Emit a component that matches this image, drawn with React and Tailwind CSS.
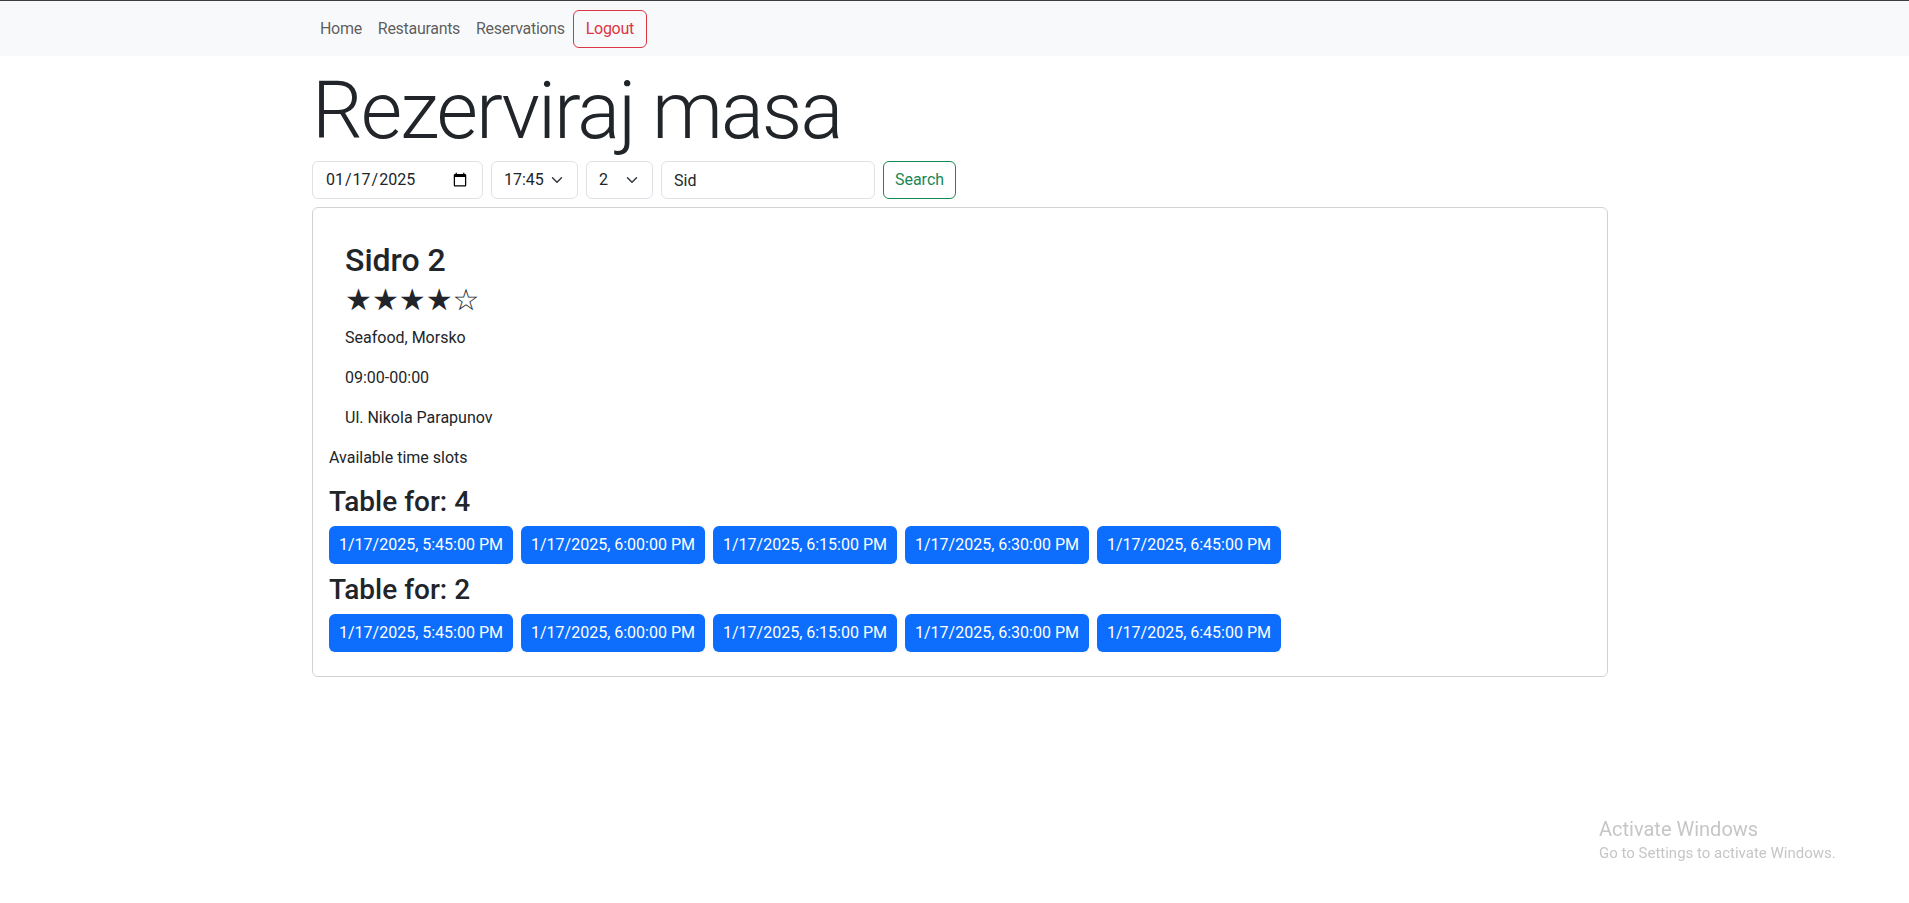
import React, { useState } from "react";

const slots = [
  "1/17/2025, 5:45:00 PM",
  "1/17/2025, 6:00:00 PM",
  "1/17/2025, 6:15:00 PM",
  "1/17/2025, 6:30:00 PM",
  "1/17/2025, 6:45:00 PM",
];

const tables = [
  { seats: 4, slots },
  { seats: 2, slots },
];

function Chevron() {
  return (
    <svg
      className="pointer-events-none absolute right-[13px] top-1/2 -translate-y-1/2"
      width="16"
      height="12"
      viewBox="0 0 16 16"
      fill="none"
    >
      <path
        d="m2 5 6 6 6-6"
        stroke="#343a40"
        strokeWidth="2"
        strokeLinecap="round"
        strokeLinejoin="round"
      />
    </svg>
  );
}

function Navbar() {
  return (
    <nav className="h-14 border-t border-[#3c3c3c] bg-[#f8f9fa]">
      <div className="ml-[300px] flex h-full w-[1320px] items-center px-3 tracking-[-0.3px]">
        <a href="#" className="px-2 py-2 leading-6 text-[rgba(0,0,0,0.65)]">
          Home
        </a>
        <a href="#" className="px-2 py-2 leading-6 text-[rgba(0,0,0,0.65)]">
          Restaurants
        </a>
        <a href="#" className="px-2 py-2 leading-6 text-[rgba(0,0,0,0.65)]">
          Reservations
        </a>
        <button className="h-[38px] rounded-md border border-[#dc3545] px-3 leading-6 text-[#dc3545]">
          Logout
        </button>
      </div>
    </nav>
  );
}

function SearchForm() {
  const [date, setDate] = useState("2025-01-17");
  const [time, setTime] = useState("17:45");
  const [people, setPeople] = useState("2");
  const [name, setName] = useState("Sid");

  return (
    <form
      className="mb-2 flex h-[38px] gap-2"
      onSubmit={(e) => e.preventDefault()}
    >
      <input
        type="date"
        value={date}
        onChange={(e) => setDate(e.target.value)}
        className="h-[38px] w-[171px] rounded-md border border-[#dee2e6] px-3 text-base text-[#212529] outline-none"
      />
      <div className="relative w-[87px]">
        <select
          value={time}
          onChange={(e) => setTime(e.target.value)}
          className="h-[38px] w-full appearance-none rounded-md border border-[#dee2e6] bg-white pl-3 pr-7 text-base text-[#212529] outline-none"
        >
          <option>17:30</option>
          <option>17:45</option>
          <option>18:00</option>
        </select>
        <Chevron />
      </div>
      <div className="relative w-[67px]">
        <select
          value={people}
          onChange={(e) => setPeople(e.target.value)}
          className="h-[38px] w-full appearance-none rounded-md border border-[#dee2e6] bg-white pl-3 pr-7 text-base text-[#212529] outline-none"
        >
          <option>1</option>
          <option>2</option>
          <option>3</option>
          <option>4</option>
        </select>
        <Chevron />
      </div>
      <input
        type="text"
        value={name}
        onChange={(e) => setName(e.target.value)}
        className="h-[38px] w-[214px] rounded-md border border-[#dee2e6] px-3 text-base text-[#212529] outline-none"
      />
      <button
        type="submit"
        className="h-[38px] w-[73px] rounded-md border border-[#198754] text-base text-[#198754]"
      >
        Search
      </button>
    </form>
  );
}

function RestaurantCard() {
  return (
    <div className="rounded-md border border-[#d2d2d2] p-4">
      <div className="px-4 pt-4">
        <h2 className="mb-2 pt-[3px] text-[32px] font-medium leading-[35.4px]">
          Sidro 2
        </h2>
        <div className="pb-[12px] font-['DejaVu_Sans',sans-serif] text-[30px] leading-[28px]">
          ★★★★☆
        </div>
        <p className="mb-4 leading-6">Seafood, Morsko</p>
        <p className="mb-4 leading-6">09:00-00:00</p>
        <p className="mb-4 leading-6">Ul. Nikola Parapunov</p>
      </div>
      <p className="mb-[14px] leading-6">Available time slots</p>
      {tables.map((t) => (
        <div key={t.seats}>
          <h3 className="mb-2 pt-[2px] text-[28px] font-medium leading-[32px]">
            Table for: {t.seats}
          </h3>
          <div className="flex flex-wrap">
            {t.slots.map((s) => (
              <button
                key={s}
                className="mb-2 mr-2 h-[38px] w-[184px] whitespace-nowrap rounded-md bg-[#0d6efd] text-base leading-6 text-white"
              >
                {s}
              </button>
            ))}
          </div>
        </div>
      ))}
    </div>
  );
}

export default function App() {
  return (
    <div className="min-h-screen bg-white font-['Roboto',sans-serif] text-base text-[#212529]">
      <Navbar />
      <main className="ml-[300px] w-[1320px] px-3">
        <h1 className="mb-2 pt-[14px] text-[80px] font-light leading-[83px] tracking-[-2px]">
          Rezerviraj masa
        </h1>
        <SearchForm />
        <RestaurantCard />
      </main>

      {/* windows activation watermark */}
      <div className="pointer-events-none fixed left-[1599px] top-[816px] text-[#c6c6c6]">
        <div className="text-[20px] leading-[27px]">Activate Windows</div>
        <div className="text-[15px] leading-[20px]">
          Go to Settings to activate Windows.
        </div>
      </div>
    </div>
  );
}
